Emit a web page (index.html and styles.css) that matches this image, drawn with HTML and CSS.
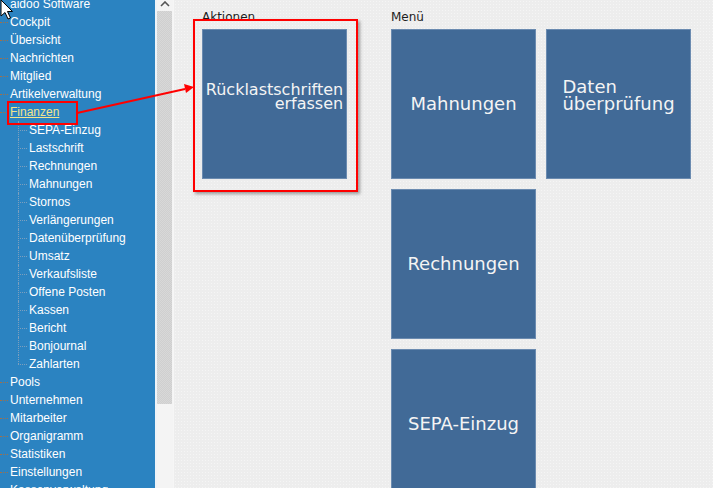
FILE: index.html
```html
<!DOCTYPE html>
<html lang="de">
<head>
    <meta charset="UTF-8">
    <title>aidoo Software - Finanzen</title>
    <link rel="stylesheet" href="styles.css">
</head>
<body>
    <div class="app">
        <!-- Navigation links -->
        <nav class="sidebar">
            <ul class="tree">
                <li class="root">aidoo Software</li>
                <li class="node">Cockpit</li>
                <li class="node">Übersicht</li>
                <li class="node">Nachrichten</li>
                <li class="node">Mitglied</li>
                <li class="node">Artikelverwaltung</li>
                <li class="node open">
                    <a href="#" class="current">Finanzen</a>
                    <ul class="sub">
                        <li>SEPA-Einzug</li>
                        <li>Lastschrift</li>
                        <li>Rechnungen</li>
                        <li>Mahnungen</li>
                        <li>Stornos</li>
                        <li>Verlängerungen</li>
                        <li>Datenüberprüfung</li>
                        <li>Umsatz</li>
                        <li>Verkaufsliste</li>
                        <li>Offene Posten</li>
                        <li>Kassen</li>
                        <li>Bericht</li>
                        <li>Bonjournal</li>
                        <li class="last">Zahlarten</li>
                    </ul>
                </li>
                <li class="node">Pools</li>
                <li class="node">Unternehmen</li>
                <li class="node">Mitarbeiter</li>
                <li class="node">Organigramm</li>
                <li class="node">Statistiken</li>
                <li class="node">Einstellungen</li>
                <li class="node">Kassenverwaltung</li>
            </ul>
        </nav>

        <div class="scrollbar">
            <div class="scroll-up">
                <svg width="10" height="6" viewBox="0 0 10 6"><path d="M1 5 L5 1 L9 5" fill="none" stroke="#555" stroke-width="1.6"/></svg>
            </div>
            <div class="scroll-thumb"></div>
        </div>

        <main class="content">
            <section class="group">
                <h2 class="group-title">Aktionen</h2>
                <div class="tiles">
                    <a href="#" class="tile tile-small"><span class="tile-text right">Rücklastschriften<br>erfassen</span></a>
                </div>
            </section>
            <section class="group">
                <h2 class="group-title">Menü</h2>
                <div class="tiles tiles-2">
                    <a href="#" class="tile"><span class="tile-text">Mahnungen</span></a>
                    <a href="#" class="tile"><span class="tile-text left">Daten<br>überprüfung</span></a>
                    <a href="#" class="tile"><span class="tile-text">Rechnungen</span></a>
                    <div></div>
                    <a href="#" class="tile"><span class="tile-text">SEPA-Einzug</span></a>
                </div>
            </section>
        </main>
    </div>

    <!-- Markierungen (Screenshot-Anmerkungen) -->
    <div class="mark mark-nav"></div>
    <div class="mark mark-tile"></div>
    <svg class="mark-arrow" width="713" height="488" viewBox="0 0 713 488">
        <line x1="77" y1="113" x2="185" y2="89" stroke="#ff0000" stroke-width="2"/>
        <polygon points="194,87 184,84 186,93" fill="#ff0000"/>
    </svg>
    <svg class="cursor" width="14" height="22" viewBox="0 0 14 22">
        <path d="M1 1 L1 17 L5 13.5 L8 20 L10.5 19 L7.5 12.5 L12.5 12.5 Z" fill="#fff" stroke="#000" stroke-width="1"/>
    </svg>
</body>
</html>
```

FILE: styles.css
```css
/* Reset */
* {
    margin: 0;
    padding: 0;
    box-sizing: border-box;
}

html, body {
    height: 100%;
    overflow: hidden;
}

body {
    font-family: "DejaVu Sans", Verdana, sans-serif;
    background-color: #eeeeee;
    color: #222;
}

a {
    text-decoration: none;
    color: inherit;
}

.app {
    display: flex;
    height: 100%;
}

/* Sidebar */
.sidebar {
    width: 155px;
    flex-shrink: 0;
    background-color: #2b83c1;
    overflow: hidden;
    font-family: "Liberation Sans", Arial, sans-serif;
    font-size: 12px;
    color: #fff;
}

.tree {
    list-style: none;
    margin-top: -5px;
}

.tree li {
    line-height: 18px;
    white-space: nowrap;
    position: relative;
}

.root {
    padding-left: 10px;
}

.node {
    padding-left: 10px;
}

.node::before {
    content: "";
    position: absolute;
    left: 0;
    top: 9px;
    width: 8px;
    border-top: 1px dotted #a0704a;
}

.current {
    color: #f3e58c;
    text-decoration: underline;
}

.sub {
    list-style: none;
    position: relative;
}

.sub li {
    padding-left: 19px;
}

.sub li::before {
    content: "";
    position: absolute;
    left: 8px;
    top: 9px;
    width: 9px;
    border-top: 1px dotted #7d9fbd;
}

.sub li::after {
    content: "";
    position: absolute;
    left: 8px;
    top: 0;
    height: 18px;
    border-left: 1px dotted #7d9fbd;
}

.sub li.last::after {
    height: 9px;
}

/* Scrollbar */
.scrollbar {
    width: 18px;
    flex-shrink: 0;
    background-color: #f4f4f4;
    border-left: 2px solid #eef3f8;
    display: flex;
    flex-direction: column;
}

.scroll-up {
    height: 11px;
    display: flex;
    justify-content: center;
    align-items: flex-start;
    padding-top: 1px;
}

.scroll-thumb {
    width: 15px;
    height: 393px;
    background-color: #d3d3d3;
    background-image: repeating-conic-gradient(#cfcfcf 0 25%, #d8d8d8 0 50%);
    background-size: 2px 2px;
}

/* Content */
.content {
    flex: 1;
    display: flex;
    gap: 44px;
    padding: 10px 0 0 28px;
    background-color: #ededed;
    background-image: radial-gradient(#f5f5f5 0.8px, transparent 0.9px);
    background-size: 3px 3px;
    border-left: 1px solid #f6f6f6;
}

.group-title {
    font-size: 12px;
    font-weight: normal;
    line-height: 14px;
    color: #1e1e1e;
    margin-bottom: 5px;
}

.tiles {
    display: grid;
    grid-template-columns: 145px;
    grid-auto-rows: 150px;
    gap: 10px;
}

.tiles-2 {
    grid-template-columns: 145px 145px;
}

.tile {
    display: flex;
    justify-content: center;
    align-items: flex-end;
    padding-bottom: 66px;
    background-color: #416a97;
    border: 1px solid #6b8bb0;
    color: #f4f4f4;
    font-size: 18px;
    line-height: 17px;
    overflow: hidden;
}

.tile-small {
    font-size: 16px;
    line-height: 14px;
    padding-bottom: 67px;
}

.tile-text {
    text-align: center;
    white-space: nowrap;
}

.tile-text.left {
    text-align: left;
}

.tile-text.right {
    text-align: right;
}

/* Markierungen */
.mark {
    position: absolute;
    border: 2px solid #ff0000;
    pointer-events: none;
}

.mark-nav {
    left: 7px;
    top: 101px;
    width: 71px;
    height: 24px;
}

.mark-tile {
    left: 193px;
    top: 19px;
    width: 165px;
    height: 173px;
    box-shadow: 2px 2px 3px rgba(0, 0, 0, 0.35);
}

.mark-arrow {
    position: absolute;
    left: 0;
    top: 0;
    pointer-events: none;
}

.cursor {
    position: absolute;
    left: 0;
    top: -1px;
}
```
